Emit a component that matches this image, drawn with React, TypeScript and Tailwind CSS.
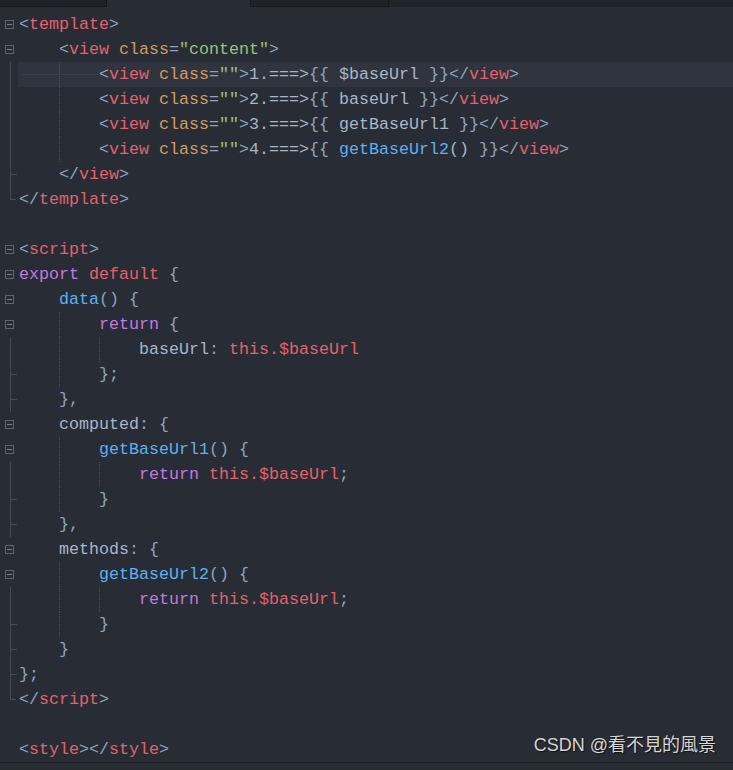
type Tok = [string, keyof typeof C];
type Gutter = 'open' | 'line' | 'tick' | 'end' | 'none';

interface Line {
  indent: number;
  guides: number[];
  gutter: Gutter;
  toks: Tok[];
  current?: boolean;
}

const C = {
  p: 'text-[#8fa4be]',
  t: 'text-[#e5616a]',
  a: 'text-[#d39a5f]',
  s: 'text-[#98c379]',
  x: 'text-[#a9b6c6]',
  f: 'text-[#5fb0f0]',
  k: 'text-[#c678dd]',
};

const viewLine = (body: Tok[]): Tok[] => [
  ['<', 'p'],
  ['view', 't'],
  [' ', 'x'],
  ['class', 'a'],
  ['=', 'p'],
  ['""', 's'],
  ['>', 'p'],
  ...body,
  ['</', 'p'],
  ['view', 't'],
  ['>', 'p'],
];

const LINES: Line[] = [
  { indent: 0, guides: [], gutter: 'open', toks: [['<', 'p'], ['template', 't'], ['>', 'p']] },
  {
    indent: 1,
    guides: [],
    gutter: 'open',
    toks: [['<', 'p'], ['view', 't'], [' ', 'x'], ['class', 'a'], ['=', 'p'], ['"content"', 's'], ['>', 'p']],
  },
  {
    indent: 2,
    guides: [1],
    gutter: 'line',
    current: true,
    toks: viewLine([['1.===>', 'x'], ['{{', 'p'], [' $baseUrl ', 'x'], ['}}', 'p']]),
  },
  { indent: 2, guides: [1], gutter: 'line', toks: viewLine([['2.===>', 'x'], ['{{', 'p'], [' baseUrl ', 'x'], ['}}', 'p']]) },
  { indent: 2, guides: [1], gutter: 'line', toks: viewLine([['3.===>', 'x'], ['{{', 'p'], [' getBaseUrl1 ', 'x'], ['}}', 'p']]) },
  {
    indent: 2,
    guides: [1],
    gutter: 'line',
    toks: viewLine([['4.===>', 'x'], ['{{', 'p'], [' ', 'x'], ['getBaseUrl2', 'f'], ['() ', 'x'], ['}}', 'p']]),
  },
  { indent: 1, guides: [], gutter: 'tick', toks: [['</', 'p'], ['view', 't'], ['>', 'p']] },
  { indent: 0, guides: [], gutter: 'end', toks: [['</', 'p'], ['template', 't'], ['>', 'p']] },
  { indent: 0, guides: [], gutter: 'none', toks: [] },
  { indent: 0, guides: [], gutter: 'open', toks: [['<', 'p'], ['script', 't'], ['>', 'p']] },
  { indent: 0, guides: [], gutter: 'open', toks: [['export', 'k'], [' ', 'x'], ['default', 't'], [' {', 'p']] },
  { indent: 1, guides: [], gutter: 'open', toks: [['data', 'f'], ['() {', 'p']] },
  { indent: 2, guides: [1], gutter: 'open', toks: [['return', 'k'], [' {', 'p']] },
  {
    indent: 3,
    guides: [1, 2],
    gutter: 'line',
    toks: [['baseUrl', 'x'], [': ', 'p'], ['this.$baseUrl', 't']],
  },
  { indent: 2, guides: [1], gutter: 'tick', toks: [['};', 'p']] },
  { indent: 1, guides: [], gutter: 'tick', toks: [['},', 'p']] },
  { indent: 1, guides: [], gutter: 'open', toks: [['computed', 'x'], [': {', 'p']] },
  { indent: 2, guides: [1], gutter: 'open', toks: [['getBaseUrl1', 'f'], ['() {', 'p']] },
  { indent: 3, guides: [1, 2], gutter: 'line', toks: [['return', 'k'], [' ', 'x'], ['this.$baseUrl', 't'], [';', 'p']] },
  { indent: 2, guides: [1], gutter: 'tick', toks: [['}', 'p']] },
  { indent: 1, guides: [], gutter: 'tick', toks: [['},', 'p']] },
  { indent: 1, guides: [], gutter: 'open', toks: [['methods', 'x'], [': {', 'p']] },
  { indent: 2, guides: [1], gutter: 'open', toks: [['getBaseUrl2', 'f'], ['() {', 'p']] },
  { indent: 3, guides: [1, 2], gutter: 'line', toks: [['return', 'k'], [' ', 'x'], ['this.$baseUrl', 't'], [';', 'p']] },
  { indent: 2, guides: [1], gutter: 'tick', toks: [['}', 'p']] },
  { indent: 1, guides: [], gutter: 'tick', toks: [['}', 'p']] },
  { indent: 0, guides: [], gutter: 'tick', toks: [['};', 'p']] },
  { indent: 0, guides: [], gutter: 'end', toks: [['</', 'p'], ['script', 't'], ['>', 'p']] },
  { indent: 0, guides: [], gutter: 'none', toks: [] },
  {
    indent: 0,
    guides: [],
    gutter: 'none',
    toks: [['<', 'p'], ['style', 't'], ['>', 'p'], ['</', 'p'], ['style', 't'], ['>', 'p']],
  },
];

function GutterCell({ kind }: { kind: Gutter }) {
  if (kind === 'open') {
    return (
      <div className="w-[18px] shrink-0 flex items-center">
        <div className="ml-[5px] w-[9px] h-[9px] border border-[#5d6471] flex items-center justify-center">
          <div className="w-[5px] h-px bg-[#7a8290]" />
        </div>
      </div>
    );
  }
  if (kind === 'line') {
    return (
      <div className="w-[18px] shrink-0">
        <div className="ml-[10px] h-full border-l border-[#454b56]" />
      </div>
    );
  }
  if (kind === 'tick') {
    return (
      <div className="w-[18px] shrink-0">
        <div className="ml-[10px] h-full border-l border-[#454b56] flex items-center">
          <div className="w-[6px] h-px bg-[#454b56]" />
        </div>
      </div>
    );
  }
  if (kind === 'end') {
    return (
      <div className="w-[18px] shrink-0">
        <div className="ml-[10px] w-[6px] h-[13px] border-l border-b border-[#454b56]" />
      </div>
    );
  }
  return <div className="w-[18px] shrink-0" />;
}

function CodeLine({ line }: { line: Line }) {
  const units = Array.from({ length: line.indent }, (_, i) => i);
  return (
    <div className="flex h-[25px]">
      <GutterCell kind={line.gutter} />
      <div className={`flex-1 flex pl-px ${line.current ? 'bg-[#2f343e]' : ''}`}>
        {units.map((i) => (
          <div
            key={i}
            className={`w-[40px] shrink-0 flex items-center ${
              line.guides.includes(i) ? 'border-l border-dotted border-[#4a505b]' : ''
            }`}
          >
            {line.current && <div className="w-full h-px bg-[#3a3f4a] ml-[3px]" />}
          </div>
        ))}
        <div className="flex items-center whitespace-pre leading-[25px]">
          {line.toks.map(([text, c], i) => (
            <span key={i} className={C[c]}>
              {text}
            </span>
          ))}
        </div>
      </div>
    </div>
  );
}

export default function App() {
  return (
    <div className="w-[733px] h-[770px] bg-[#282c34] flex flex-col overflow-hidden font-['Liberation_Mono',monospace] text-[16.664px]">
      {/* tab strip */}
      <div className="h-[7px] flex shrink-0">
        <div className="w-[107px] bg-[#1f2228] border-b border-r border-[#16181c]" />
        <div className="w-[143px] bg-[#282c34]" />
        <div className="w-[139px] bg-[#1f2228] border-b border-x border-[#16181c]" />
        <div className="flex-1 bg-[#21242b]" />
      </div>

      <div className="relative flex-1 pt-[5px]">
        {LINES.map((line, i) => (
          <CodeLine key={i} line={line} />
        ))}
        <div className="absolute right-[17px] bottom-[3px] font-['Liberation_Sans','Noto_Sans_CJK_TC',sans-serif] text-[18px] text-[#d6d6d6] [text-shadow:1px_1px_1px_#111]">
          CSDN @看不見的風景
        </div>
      </div>

      <div className="h-[8px] shrink-0 border-t border-[#1b1e23] bg-[#272b32]" />
    </div>
  );
}
